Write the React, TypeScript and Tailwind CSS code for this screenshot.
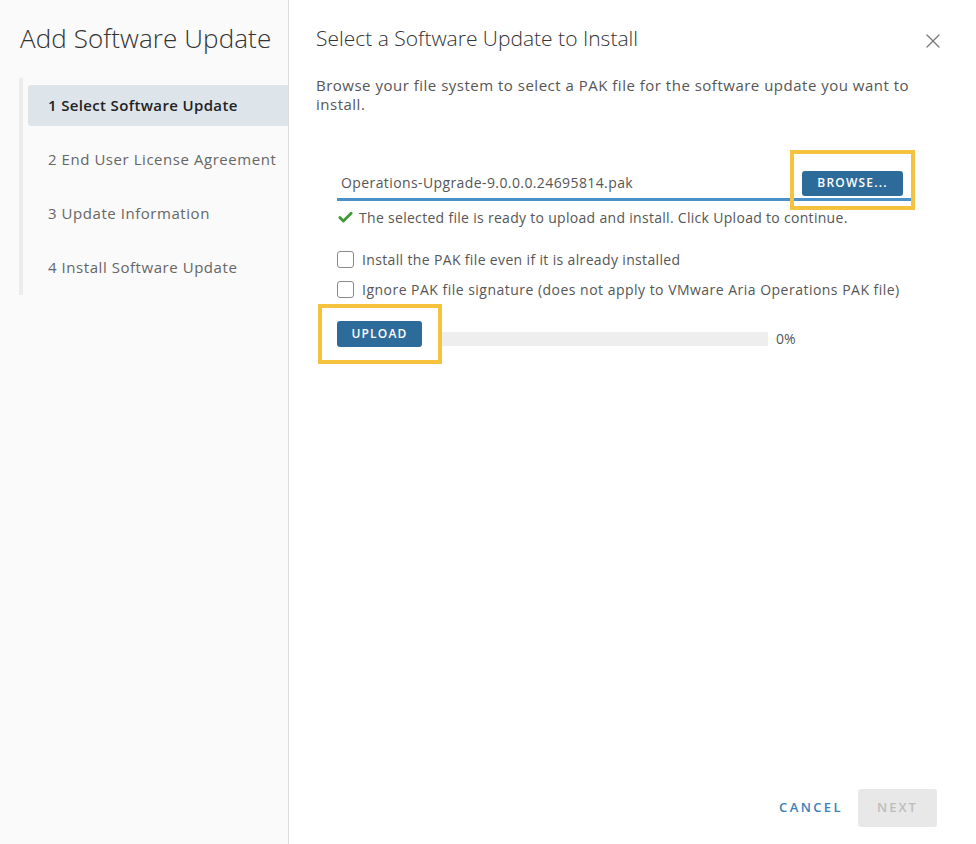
import { X, Check } from 'lucide-react';

const steps = [
  '1 Select Software Update',
  '2 End User License Agreement',
  '3 Update Information',
  '4 Install Software Update',
];

function Sidebar() {
  return (
    <div className="w-[289px] shrink-0 bg-[#fafafa] border-r border-[#dcdcdc] flex flex-col">
      <h1 className="pl-[20px] pt-[22px] text-[26px] leading-[32px] font-light text-[#333] tracking-[0.1px]">Add Software Update</h1>
      <div className="mt-[24px] ml-[19px] border-l-[4px] border-[#ececec] pt-[7px] pb-[7px]">
        {steps.map((s, i) => (
          <div
            key={s}
            className={
              i === 0
                ? 'ml-[5px] h-[41px] mb-[13px] rounded-l-[3px] bg-[#dde5eb] flex items-center pl-[20px] text-[15px] tracking-[0.35px] font-semibold text-[#222]'
                : 'ml-[5px] h-[41px] mb-[13px] last:mb-0 flex items-center pl-[20px] text-[15px] tracking-[0.55px] text-[#666]'
            }
          >
            {s}
          </div>
        ))}
      </div>
    </div>
  );
}

function Content() {
  return (
    <div className="flex-1 flex flex-col relative pl-[27px] pr-[35px]">
      <button className="absolute right-[31px] top-[29px] text-[#777]">
        <X size={24} strokeWidth={1.2} />
      </button>
      <h2 className="pt-[24px] text-[21px] leading-[28px] font-light text-[#333]">Select a Software Update to Install</h2>
      <p className="mt-[24px] text-[15px] leading-[19px] tracking-[0.5px] text-[#565656] pr-[20px]">
        Browse your file system to select a PAK file for the software update you want to install.
      </p>

      <div className="mt-[53px] ml-[21px] w-[576px]">
        <div className="flex items-center justify-between h-[34px] border-b-[3px] border-[#4a90c9] pl-[4px] pr-[10px]">
          <span className="text-[14px] tracking-[0.4px] text-[#565656]">Operations-Upgrade-9.0.0.0.24695814.pak</span>
          <div className="relative">
            <span className="absolute -left-[12px] -top-[19px] w-[125px] h-[60px] border-[4px] border-[#f5c23e]"></span>
            <button className="relative w-[101px] h-[25px] rounded-[3px] bg-[#2d6b9a] text-white text-[12px] font-semibold tracking-[1.2px]">
              BROWSE...
            </button>
          </div>
        </div>
        <div className="mt-[6px] h-[20px] flex items-center gap-[5px] text-[14px] tracking-[0.3px] text-[#565656]">
          <Check size={17} strokeWidth={4} className="text-[#3f9c35]" />
          <span>The selected file is ready to upload and install. Click Upload to continue.</span>
        </div>

        <label className="mt-[22px] h-[20px] flex items-center gap-[8px] text-[14px] tracking-[0.35px] text-[#565656]">
          <span className="w-[17px] h-[17px] rounded-[3px] border border-[#8a8a8a] bg-white"></span>
          Install the PAK file even if it is already installed
        </label>
        <label className="mt-[10px] h-[20px] flex items-center gap-[8px] text-[14px] tracking-[0.48px] text-[#565656]">
          <span className="w-[17px] h-[17px] rounded-[3px] border border-[#8a8a8a] bg-white"></span>
          Ignore PAK file signature (does not apply to VMware Aria Operations PAK file)
        </label>

        <div className="mt-[18px] flex items-center">
          <div className="relative">
            <span className="absolute -left-[19px] -top-[16px] w-[124px] h-[60px] border-[4px] border-[#f5c23e]"></span>
            <button className="relative w-[85px] h-[26px] rounded-[3px] bg-[#2d6b9a] text-white text-[12px] font-semibold tracking-[1.2px]">
              UPLOAD
            </button>
          </div>
          <div className="ml-[16px] w-[330px] h-[14px] bg-[#eeeeee] mt-[11px]"></div>
          <span className="ml-[8px] mt-[11px] text-[14px] text-[#565656]">0%</span>
        </div>
      </div>

      <div className="mt-auto mb-[17px] flex justify-end items-center gap-[15px] pr-[4px]">
        <button className="text-[13px] font-semibold tracking-[2.4px] text-[#3a82b8] h-[38px]">CANCEL</button>
        <button className="w-[79px] h-[38px] rounded-[3px] bg-[#e8e8e8] text-[13px] font-semibold tracking-[2px] text-[#bdbdbd]">NEXT</button>
      </div>
    </div>
  );
}

export default function App() {
  return (
    <div className="w-[976px] h-[844px] bg-white flex font-['Open_Sans',sans-serif]">
      <Sidebar />
      <Content />
    </div>
  );
}
